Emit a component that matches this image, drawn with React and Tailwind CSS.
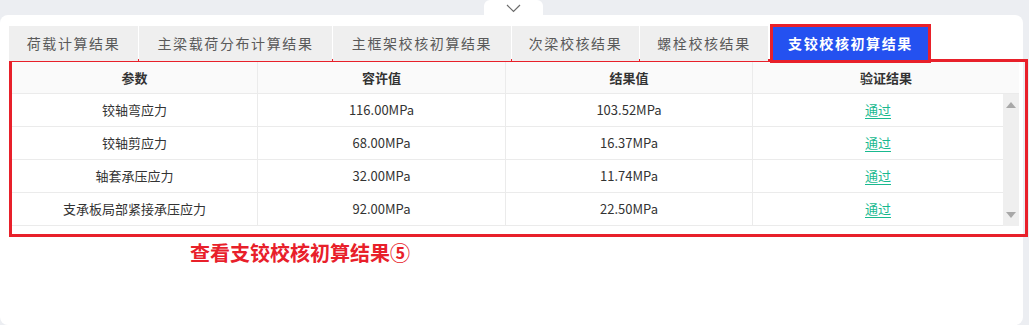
import React from 'react';

const tabs = [
    { label: '荷载计算结果', w: 'w-[129px]' },
    { label: '主梁载荷分布计算结果', w: 'w-[193px]' },
    { label: '主框架校核初算结果', w: 'w-[178px]' },
    { label: '次梁校核结果', w: 'w-[127px]' },
    { label: '螺栓校核结果', w: 'w-[128px]' },
];

const rows = [
    ['铰轴弯应力', '116.00MPa', '103.52MPa'],
    ['铰轴剪应力', '68.00MPa', '16.37MPa'],
    ['轴套承压应力', '32.00MPa', '11.74MPa'],
    ['支承板局部紧接承压应力', '92.00MPa', '22.50MPa'],
];

const font = { fontFamily: '"Noto Sans CJK SC", "Noto Sans", sans-serif' };

const App = () => {
    return (
        <div className="w-[1029px] h-[325px] bg-[#eceef2] relative overflow-hidden" style={font}>
            {/* collapse handle */}
            <div className="absolute left-[484px] top-0 w-[59px] h-[16px] bg-white rounded-t-md flex justify-center pt-[4px]">
                <svg width="15" height="9" viewBox="0 0 15 9" fill="none">
                    <polyline points="1,1 7.5,7.5 14,1" stroke="#6b6b6b" strokeWidth="1.2" />
                </svg>
            </div>

            <div className="mt-[15px] mr-[6px] h-[310px] bg-white rounded-lg pt-[8px] pl-[9px]">
                <div className="flex items-center h-[40px]">
                    {tabs.map((t, i) => (
                        <div
                            key={i}
                            className={`${t.w} h-[35px] mr-px bg-[#efefef] flex items-center justify-center text-[14px] tracking-[1.6px] text-[#5a5a5a]`}
                        >
                            {t.label}
                        </div>
                    ))}
                    <div className="border-[3px] border-[#e8202a] ml-[1px]">
                        <div className="w-[155px] h-[33px] bg-[#2451f0] flex items-center justify-center text-white font-bold text-[14px] tracking-[1.6px]">
                            支铰校核初算结果
                        </div>
                    </div>
                </div>

                <div className="w-[1019px] -mt-[4px] border-[3px] border-[#e8202a] pr-[6px] pb-[8px]">
                    <div className="text-[13px] text-[#333]">
                        <div className="flex h-[32px] bg-[#fafafa] border-b border-[#ebebeb] font-bold">
                            <div className="w-[246px] flex items-center justify-center border-r border-[#ebebeb]">参数</div>
                            <div className="w-[248px] flex items-center justify-center border-r border-[#ebebeb]">容许值</div>
                            <div className="w-[247px] flex items-center justify-center border-r border-[#ebebeb]">结果值</div>
                            <div className="flex-1 flex items-center justify-center">验证结果</div>
                        </div>
                        <div className="flex">
                            <div className="flex-1">
                                {rows.map((r, i) => (
                                    <div key={i} className="flex h-[33px] border-b border-[#ebebeb]">
                                        <div className="w-[246px] flex items-center justify-center border-r border-[#ebebeb]">{r[0]}</div>
                                        <div className="w-[248px] flex items-center justify-center border-r border-[#ebebeb]">{r[1]}</div>
                                        <div className="w-[247px] flex items-center justify-center border-r border-[#ebebeb]">{r[2]}</div>
                                        <div className="flex-1 flex items-center justify-center">
                                            <span className="text-[#19b98f] underline underline-offset-[3px] decoration-1">通过</span>
                                        </div>
                                    </div>
                                ))}
                            </div>
                            <div className="w-[16px] bg-[#efefef] flex flex-col items-center justify-between py-[8px]">
                                <div className="w-0 h-0 border-l-[5px] border-r-[5px] border-b-[6px] border-l-transparent border-r-transparent border-b-[#a8a8a8]" />
                                <div className="w-0 h-0 border-l-[5px] border-r-[5px] border-t-[6px] border-l-transparent border-r-transparent border-t-[#a8a8a8]" />
                            </div>
                        </div>
                    </div>
                </div>

                <div className="pl-[181px] pt-[2px] text-[20px] font-bold text-[#e8202a] leading-[28px]">
                    查看支铰校核初算结果⑤
                </div>
            </div>
        </div>
    );
};

export default App;
